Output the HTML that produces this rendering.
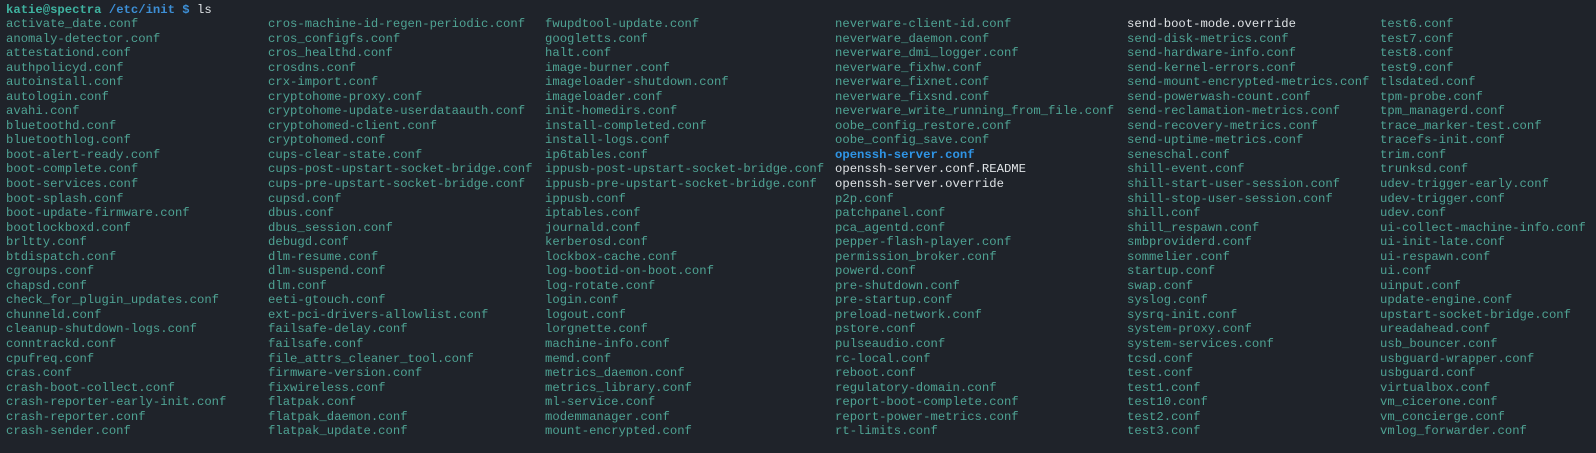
<!DOCTYPE html>
<html><head><meta charset="utf-8"><style>
html,body{margin:0;padding:0;background:#1f232a;width:1596px;height:453px;overflow:hidden}
pre{margin:0;position:absolute;font-family:"Liberation Mono",monospace;font-size:12px;line-height:14.55px;color:#4fa394;transform:scale(1.02,1);transform-origin:0 0}
.p{top:3px;left:6px;color:#dfe3e6}
.g{color:#3fb3a0;font-weight:bold}.b{color:#3d8fd6;font-weight:bold}
.c{top:17px}
.w{color:#dfe3e6}.bl{color:#2f95e6;font-weight:bold}
</style></head><body>
<pre class="p"><span class="g">katie@spectra</span> <span class="b">/etc/init $</span> ls</pre>
<pre class="c" style="left:6px">activate_date.conf
anomaly-detector.conf
attestationd.conf
authpolicyd.conf
autoinstall.conf
autologin.conf
avahi.conf
bluetoothd.conf
bluetoothlog.conf
boot-alert-ready.conf
boot-complete.conf
boot-services.conf
boot-splash.conf
boot-update-firmware.conf
bootlockboxd.conf
brltty.conf
btdispatch.conf
cgroups.conf
chapsd.conf
check_for_plugin_updates.conf
chunneld.conf
cleanup-shutdown-logs.conf
conntrackd.conf
cpufreq.conf
cras.conf
crash-boot-collect.conf
crash-reporter-early-init.conf
crash-reporter.conf
crash-sender.conf</pre>
<pre class="c" style="left:268px">cros-machine-id-regen-periodic.conf
cros_configfs.conf
cros_healthd.conf
crosdns.conf
crx-import.conf
cryptohome-proxy.conf
cryptohome-update-userdataauth.conf
cryptohomed-client.conf
cryptohomed.conf
cups-clear-state.conf
cups-post-upstart-socket-bridge.conf
cups-pre-upstart-socket-bridge.conf
cupsd.conf
dbus.conf
dbus_session.conf
debugd.conf
dlm-resume.conf
dlm-suspend.conf
dlm.conf
eeti-gtouch.conf
ext-pci-drivers-allowlist.conf
failsafe-delay.conf
failsafe.conf
file_attrs_cleaner_tool.conf
firmware-version.conf
fixwireless.conf
flatpak.conf
flatpak_daemon.conf
flatpak_update.conf</pre>
<pre class="c" style="left:545px">fwupdtool-update.conf
googletts.conf
halt.conf
image-burner.conf
imageloader-shutdown.conf
imageloader.conf
init-homedirs.conf
install-completed.conf
install-logs.conf
ip6tables.conf
ippusb-post-upstart-socket-bridge.conf
ippusb-pre-upstart-socket-bridge.conf
ippusb.conf
iptables.conf
journald.conf
kerberosd.conf
lockbox-cache.conf
log-bootid-on-boot.conf
log-rotate.conf
login.conf
logout.conf
lorgnette.conf
machine-info.conf
memd.conf
metrics_daemon.conf
metrics_library.conf
ml-service.conf
modemmanager.conf
mount-encrypted.conf</pre>
<pre class="c" style="left:835px">neverware-client-id.conf
neverware_daemon.conf
neverware_dmi_logger.conf
neverware_fixhw.conf
neverware_fixnet.conf
neverware_fixsnd.conf
neverware_write_running_from_file.conf
oobe_config_restore.conf
oobe_config_save.conf
<span class="bl">openssh-server.conf</span>
<span class="w">openssh-server.conf.README</span>
<span class="w">openssh-server.override</span>
p2p.conf
patchpanel.conf
pca_agentd.conf
pepper-flash-player.conf
permission_broker.conf
powerd.conf
pre-shutdown.conf
pre-startup.conf
preload-network.conf
pstore.conf
pulseaudio.conf
rc-local.conf
reboot.conf
regulatory-domain.conf
report-boot-complete.conf
report-power-metrics.conf
rt-limits.conf</pre>
<pre class="c" style="left:1127px"><span class="w">send-boot-mode.override</span>
send-disk-metrics.conf
send-hardware-info.conf
send-kernel-errors.conf
send-mount-encrypted-metrics.conf
send-powerwash-count.conf
send-reclamation-metrics.conf
send-recovery-metrics.conf
send-uptime-metrics.conf
seneschal.conf
shill-event.conf
shill-start-user-session.conf
shill-stop-user-session.conf
shill.conf
shill_respawn.conf
smbproviderd.conf
sommelier.conf
startup.conf
swap.conf
syslog.conf
sysrq-init.conf
system-proxy.conf
system-services.conf
tcsd.conf
test.conf
test1.conf
test10.conf
test2.conf
test3.conf</pre>
<pre class="c" style="left:1380px">test6.conf
test7.conf
test8.conf
test9.conf
tlsdated.conf
tpm-probe.conf
tpm_managerd.conf
trace_marker-test.conf
tracefs-init.conf
trim.conf
trunksd.conf
udev-trigger-early.conf
udev-trigger.conf
udev.conf
ui-collect-machine-info.conf
ui-init-late.conf
ui-respawn.conf
ui.conf
uinput.conf
update-engine.conf
upstart-socket-bridge.conf
ureadahead.conf
usb_bouncer.conf
usbguard-wrapper.conf
usbguard.conf
virtualbox.conf
vm_cicerone.conf
vm_concierge.conf
vmlog_forwarder.conf</pre>
</body></html>
